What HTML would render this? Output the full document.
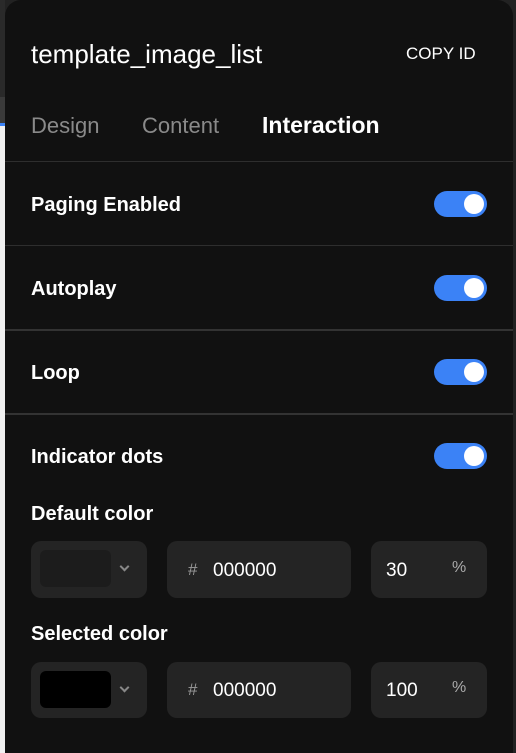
<!DOCTYPE html>
<html><head><style>
*{margin:0;padding:0;box-sizing:border-box}
body{width:516px;height:753px;background:#222;position:relative;overflow:hidden;font-family:"Liberation Sans",sans-serif;color:#fff}
.l1{position:absolute;left:0;top:0;width:5px;height:97px;background:#2a2a2a}
.l2{position:absolute;left:0;top:97px;width:5px;height:26px;background:#3a3a3a}
.l3{position:absolute;left:0;top:123px;width:5px;height:3px;background:#3b82f6}
.l4{position:absolute;left:0;top:126px;width:5px;height:627px;background:#f0f0f0}
.panel{position:absolute;left:5px;top:0;width:508px;height:753px;background:#111;border-radius:16px 16px 0 0}
.t{position:absolute;white-space:nowrap}
.hr{position:absolute;left:5px;width:508px;height:1px;background:#2e2e2e}
.tg{position:absolute;left:434px;width:53px;height:26px;border-radius:13px;background:#3b82f6}
.tg:after{content:"";position:absolute;right:3px;top:3px;width:20px;height:20px;border-radius:50%;background:#fff}
.lab{font-weight:bold;font-size:20px;left:31px}
.box{position:absolute;background:#242424;border-radius:10px}
.sw{position:absolute;left:9px;top:9px;width:71px;height:37px;border-radius:6px}
.chev{position:absolute;left:90px;top:22px;width:7px;height:7px;border-right:2px solid #888;border-bottom:2px solid #888;transform:rotate(45deg)}
</style></head><body>
<div class="l1"></div><div class="l2"></div><div class="l3"></div><div class="l4"></div>
<div class="panel"></div>
<div class="t" style="left:31px;top:39px;font-size:26px">template_image_list</div>
<div class="t" style="left:406px;top:44px;font-size:17px">COPY ID</div>
<div class="t" style="left:31px;top:113px;font-size:22px;color:#8a8a8a">Design</div>
<div class="t" style="left:142px;top:113px;font-size:22px;color:#8a8a8a">Content</div>
<div class="t" style="left:262px;top:112px;font-size:23px;font-weight:bold">Interaction</div>
<div class="hr" style="top:161px"></div>
<div class="t lab" style="top:194px">Paging Enabled</div><div class="tg" style="top:191px"></div>
<div class="hr" style="top:245px"></div>
<div class="t lab" style="top:278px">Autoplay</div><div class="tg" style="top:275px"></div>
<div class="hr" style="top:329px;height:2px;background:#333"></div>
<div class="t lab" style="top:362px">Loop</div><div class="tg" style="top:359px"></div>
<div class="hr" style="top:413px;height:2px;background:#333"></div>
<div class="t lab" style="top:446px">Indicator dots</div><div class="tg" style="top:443px"></div>
<div class="t lab" style="top:503px">Default color</div>
<div class="box" style="left:31px;top:541px;width:116px;height:57px"><div class="sw" style="background:#1c1c1c"></div><div class="chev"></div></div>
<div class="box" style="left:167px;top:541px;width:184px;height:57px"><span class="t" style="left:21px;top:19px;font-size:17px;color:#999">#</span><span class="t" style="left:46px;top:19px;font-size:19px">000000</span></div>
<div class="box" style="left:371px;top:541px;width:116px;height:57px"><span class="t" style="left:15px;top:19px;font-size:19px">30</span><span class="t" style="left:81px;top:18px;font-size:16px;color:#aaa">%</span></div>
<div class="t lab" style="top:623px">Selected color</div>
<div class="box" style="left:31px;top:662px;width:116px;height:56px"><div class="sw" style="background:#000"></div><div class="chev"></div></div>
<div class="box" style="left:167px;top:662px;width:184px;height:56px"><span class="t" style="left:21px;top:18px;font-size:17px;color:#999">#</span><span class="t" style="left:46px;top:18px;font-size:19px">000000</span></div>
<div class="box" style="left:371px;top:662px;width:116px;height:56px"><span class="t" style="left:15px;top:18px;font-size:19px">100</span><span class="t" style="left:81px;top:17px;font-size:16px;color:#aaa">%</span></div>
</body></html>
